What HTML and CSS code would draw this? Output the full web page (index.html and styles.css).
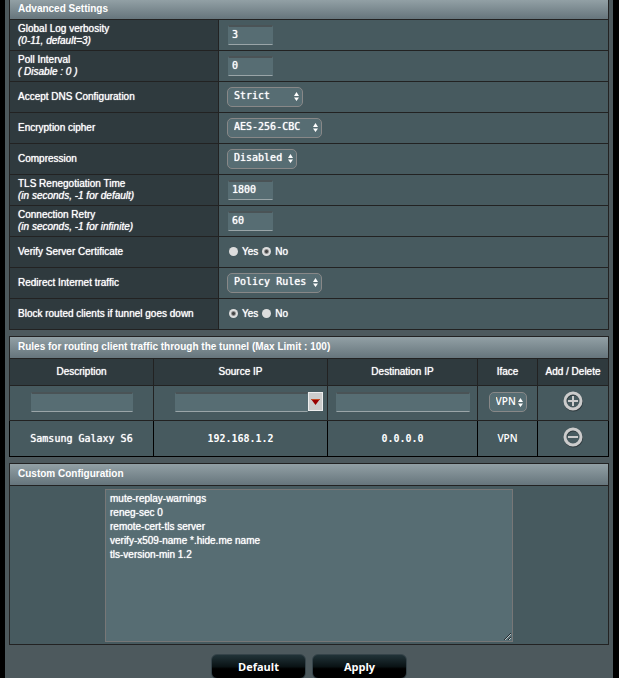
FILE: index.html
```html
<!DOCTYPE html>
<html lang="en">
<head>
<meta charset="utf-8">
<title>VPN Client</title>
<link rel="stylesheet" href="styles.css">
</head>
<body>
<form class="panel">
  <table class="grid settings">
    <colgroup><col class="c-label"><col></colgroup>
    <thead><tr><th class="title" colspan="2">Advanced Settings</th></tr></thead>
    <tbody>
      <tr><th scope="row"><label for="verb">Global Log verbosity<br><i>(0-11, default=3)</i></label></th>
        <td><input class="field short" id="verb" type="text" value="3"></td></tr>
      <tr><th scope="row"><label for="poll">Poll Interval<br><i>( Disable : 0 )</i></label></th>
        <td><input class="field short" id="poll" type="text" value="0"></td></tr>
      <tr><th scope="row"><label for="dns">Accept DNS Configuration</label></th>
        <td><span class="pick w-dns"><select id="dns"><option>Strict</option></select><svg viewBox="0 0 5 9"><path d="M0 4L2.5 0L5 4zM0 5.5H5L2.500 9z"/></svg></span></td></tr>
      <tr><th scope="row"><label for="cipher">Encryption cipher</label></th>
        <td><span class="pick w-cipher"><select id="cipher"><option>AES-256-CBC</option></select><svg viewBox="0 0 5 9"><path d="M0 4L2.5 0L5 4zM0 5.5H5L2.500 9z"/></svg></span></td></tr>
      <tr><th scope="row"><label for="comp">Compression</label></th>
        <td><span class="pick w-comp"><select id="comp"><option>Disabled</option></select><svg viewBox="0 0 5 9"><path d="M0 4L2.5 0L5 4zM0 5.5H5L2.500 9z"/></svg></span></td></tr>
      <tr><th scope="row"><label for="reneg">TLS Renegotiation Time<br><i>(in seconds, -1 for default)</i></label></th>
        <td><input class="field short" id="reneg" type="text" value="1800"></td></tr>
      <tr><th scope="row"><label for="retry">Connection Retry<br><i>(in seconds, -1 for infinite)</i></label></th>
        <td><input class="field short" id="retry" type="text" value="60"></td></tr>
      <tr><th scope="row">Verify Server Certificate</th>
        <td><div class="radios"><label><input type="radio" name="verify">Yes</label><label><input type="radio" name="verify" checked>No</label></div></td></tr>
      <tr><th scope="row"><label for="redir">Redirect Internet traffic</label></th>
        <td><span class="pick w-redir"><select id="redir"><option>Policy Rules</option></select><svg viewBox="0 0 5 9"><path d="M0 4L2.5 0L5 4zM0 5.5H5L2.500 9z"/></svg></span></td></tr>
      <tr><th scope="row">Block routed clients if tunnel goes down</th>
        <td><div class="radios"><label><input type="radio" name="block" checked>Yes</label><label><input type="radio" name="block">No</label></div></td></tr>
    </tbody>
  </table>

  <table class="grid rules">
    <colgroup><col class="c-desc"><col class="c-src"><col class="c-dst"><col class="c-if"><col class="c-act"></colgroup>
    <thead>
      <tr><th class="title" colspan="5">Rules for routing client traffic through the tunnel (Max Limit : 100)</th></tr>
      <tr class="heads"><th>Description</th><th>Source IP</th><th>Destination IP</th><th>Iface</th><th>Add / Delete</th></tr>
    </thead>
    <tbody>
      <tr class="entry">
        <td><input class="field desc" type="text" aria-label="Description"></td>
        <td><div class="combo"><input class="field" type="text" aria-label="Source IP"><button class="drop" type="button" aria-label="Choose client"><svg viewBox="0 0 9 6"><path fill="#900" d="M0 0H9L4.500 6z"/><path fill="#c84a20" d="M0 0H9L8 1H1z"/></svg></button></div></td>
        <td><input class="field dest" type="text" aria-label="Destination IP"></td>
        <td><span class="pick w-if"><select aria-label="Iface"><option>VPN</option></select><svg viewBox="0 0 5 9"><path d="M0 4L2.5 0L5 4zM0 5.5H5L2.500 9z"/></svg></span></td>
        <td><button class="icon" type="button" aria-label="Add"><svg viewBox="0 0 22 22"><circle class="shade" cx="11.500" cy="12" r="8"/><circle class="ring" cx="11" cy="11" r="8"/><path class="sign" d="M6 11H16M11 6V16"/></svg></button></td>
      </tr>
      <tr class="rule">
        <td>Samsung Galaxy S6</td><td class="ip">192.168.1.2</td><td class="ip">0.0.0.0</td><td class="sans">VPN</td>
        <td><button class="icon" type="button" aria-label="Delete"><svg viewBox="0 0 22 22"><circle class="shade" cx="11.500" cy="12" r="8"/><circle class="ring" cx="11" cy="11" r="8"/><path class="sign" d="M6 11H16"/></svg></button></td>
      </tr>
    </tbody>
  </table>

  <table class="grid custom">
    <thead><tr><th class="title"><label for="conf">Custom Configuration</label></th></tr></thead>
    <tbody><tr><td><textarea id="conf" spellcheck="false">mute-replay-warnings
reneg-sec 0
remote-cert-tls server
verify-x509-name *.hide.me name
tls-version-min 1.2</textarea></td></tr></tbody>
  </table>

  <div class="actions"><button type="button">Default</button><button type="button">Apply</button></div>
</form>
</body>
</html>
```
FILE: styles.css
```css
* { box-sizing: border-box; }
body {
  margin: 0;
  padding: 0 6px 0 5px;
  background: #000;
  color: #fff;
  font: 10px/12px "Liberation Sans", Arial, sans-serif;
}
.panel {
  padding: 0 4px;
  background: #4d595d;
  display: flex;
  flex-direction: column;
  gap: 6px;
}
.grid {
  width: 100%;
  table-layout: fixed;
  border-collapse: collapse;
  background: #475a5f;
  border: 1px solid #222;
}
.grid th, .grid td { border: 1px solid #222; padding: 0 8px; font-weight: normal; }
.grid th, .grid td, .field, .pick select, textarea { text-shadow: 0 0 1px #fff; }
.grid .title {
  height: 22px;
  text-align: left;
  font-weight: bold;
  text-shadow: none;
  background: linear-gradient(#92a0a5, #66757c) no-repeat padding-box;
}
.settings, .settings .title { border-top: 0; }
.settings .title { height: 19px; }
.c-label { width: 209px; }
.settings tbody tr { height: 31px; }
.settings tbody th { background: #2f3a3e; text-align: left; }

.field {
  display: block;
  height: 20px;
  padding: 0 3px 2px;
  border: 1px solid #576d73;
  border-top: 2px solid #4a5356;
  border-bottom-color: #9aa5a8;
  background: #576d73;
  color: #fff;
  font: 10px "DejaVu Sans Mono", monospace;
}
.short { width: 45px; margin-left: 1px; }

.pick { display: inline-grid; grid-template-columns: 1fr 9px; align-items: center; vertical-align: top; }
.pick select {
  grid-area: 1 / 1 / 2 / 3;
  appearance: none;
  height: 20px;
  padding: 0 6px 2px;
  border: 1px solid #888;
  border-radius: 5px;
  background: #576d73;
  color: #fff;
  font: 10px "DejaVu Sans Mono", monospace;
}
.pick svg { grid-area: 1 / 2; width: 5px; height: 9px; fill: #fff; pointer-events: none; }
.w-dns { width: 76px; }
.w-cipher { width: 95px; }
.w-comp { width: 70px; }
.w-redir { width: 95px; }
.w-if { width: 38px; }
.pick.w-if select { padding-right: 0; font-family: "Open Sans", sans-serif; text-shadow: none; font-weight: 600; }

.radios { display: flex; gap: 4px; padding-left: 2px; }
.radios label { display: flex; align-items: center; gap: 4px; }
.radios input {
  appearance: none;
  width: 9px;
  height: 9px;
  margin: 0;
  border-radius: 50%;
  background: #ddd;
}
.radios input:checked { background: radial-gradient(circle, #444 0 1px, #ddd 3px); }

.c-desc { width: 144px; }
.c-src { width: 174px; }
.c-dst { width: 150px; }
.c-if { width: 60px; }
.c-act { width: 71px; }
.rules th:not(.title), .rules td { text-align: center; padding: 0; }
.heads { height: 27px; background: #2f3a3e; }
.entry { height: 35px; }
.entry .field { margin: 0 auto; }
.desc { width: 102px; }
.dest { width: 134px; }
.combo { display: flex; width: 148px; margin: 0 4px 0 auto; }
.entry .combo .field { flex: 1; min-width: 0; margin: 0; }
.entry td { padding-bottom: 1px; }
.drop {
  display: grid;
  place-items: center;
  width: 15px;
  height: 19px;
  padding: 0;
  border: 1px solid #eee;
  background: #ccc;
}
.drop svg { width: 9px; height: 6px; }
.rule { height: 36px; font: 10px "DejaVu Sans Mono", monospace; }
.rules .rule td { border-color: #000; }
.rule .sans { font: 600 10px "Open Sans", sans-serif; text-shadow: none; }
.rules .rule .ip { font-weight: bold; text-shadow: none; }
.icon { display: block; margin: 0 auto 3px; padding: 0; border: 0; background: none; width: 22px; height: 22px; }
.icon svg { display: block; }
.shade, .ring, .sign { fill: none; stroke: #ccc; stroke-width: 3; }
.shade { stroke: #2f3a3e; }
.sign { stroke-width: 2; }

.custom td { height: 158px; padding: 3px 0 2px; }
textarea {
  display: block;
  width: 408px;
  max-width: 100%;
  height: 153px;
  margin: 0 auto;
  padding: 2px 4px;
  border: 1px solid #777;
  background: #576d73;
  color: #fff;
  font: 10px/14px "Liberation Sans", Arial, sans-serif;
}

.actions { display: flex; justify-content: center; gap: 6px; padding-top: 3px; }
.actions button {
  width: 95px;
  height: 25px;
  border: 1px solid #354349;
  border-radius: 6px;
  background: linear-gradient(#213338, #0a1315 50%, #000 60%);
  color: #fff;
  font: bold 11px "Open Sans", sans-serif;
}
```
